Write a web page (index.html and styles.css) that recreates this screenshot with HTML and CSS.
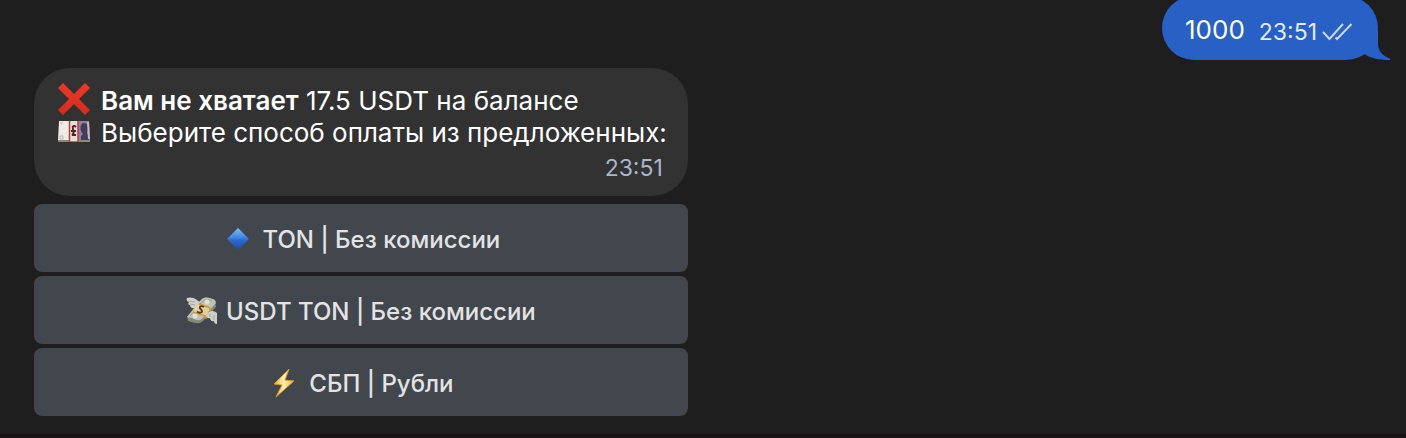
FILE: index.html
```html
<!DOCTYPE html>
<html lang="ru">
<head>
<meta charset="utf-8">
<title>Чат</title>
<link rel="stylesheet" href="styles.css">
</head>
<body>
<main class="chat">
  <article class="bubble bubble-out">
    <p class="out-text">1000</p>
    <time class="time time-out">23:51</time>
    <svg class="checks" viewBox="0 0 32 20" role="img" aria-label="Прочитано"><path d="M2 10 8.500 17 22 2M14.500 15.500 16 17 30.500 2"/></svg>
    <svg class="tail" viewBox="0 0 34 30" aria-hidden="true"><path d="M22 0V14C22 21 27 26 34 28.500V30C23 30 13 28 8 23.500L0 20V0Z"/></svg>
  </article>

  <section class="incoming">
    <article class="bubble bubble-in">
      <p class="line">
        <svg class="emoji" viewBox="0 0 34 34" role="img" aria-label="Крестик"><defs><linearGradient id="red" x2="0" y2="1"><stop stop-color="#ed3928"/><stop offset="1" stop-color="#d32b1d"/></linearGradient></defs><path fill="url(#red)" d="M6 1 17 12 28 1 33 6 22 17 33 28 28 33 17 22 6 33 1 28 12 17 1 6Z"/></svg>
        <span><strong>Вам не хватает</strong> 17.5 USDT на балансе</span>
      </p>
      <p class="line">
        <svg class="emoji" viewBox="0 0 34 34" role="img" aria-label="Банкноты">
          <path fill="#8b897d" d="M1 25H33V28H1Z"/><path fill="#eeebe5" d="M2 7H13V26H1Z"/><path fill="none" stroke="#bcb8b4" d="M3 9H6M3 22H6V25H3Z"/>
          <path fill="#8b849c" d="M21 7H32L33 26H21Z"/><path fill="#423c5d" d="M24 26V22L26 20C22 16 23 9 27 9S32 14 30 19L32 23V26Z"/>
          <path fill="#c9b8ba" d="M30 8H32L33 25H31Z"/><path fill="#e8dcda" d="M13 7H21V27H12Z"/><path fill="none" stroke="#bd3b3b" stroke-width="1.500" d="M12.500 7V28M21 7V28"/>
          <path fill="none" stroke="#47282d" stroke-width="2" d="M19 13C17 11 15 12 16 15S17 20 15 21H19M14 17H19"/>
        </svg>
        <span>Выберите способ оплаты из предложенных:</span>
      </p>
      <time class="time time-in">23:51</time>
    </article>
    <div class="keyboard">
      <button class="key key-wide" type="button">
        <svg class="icon" viewBox="0 0 24 30" aria-hidden="true"><defs><linearGradient id="blue" x2="0" y2="1"><stop stop-color="#83bff7"/><stop offset=".45" stop-color="#3f82df"/><stop offset=".55" stop-color="#2d69ce"/><stop offset="1" stop-color="#1e49a6"/></linearGradient></defs><path fill="url(#blue)" d="M12 4 23 15 12 26 1 15Z"/></svg>
        <span>TON | Без комиссии</span>
      </button>
      <button class="key" type="button">
        <svg class="icon icon-money" viewBox="0 0 32 30" aria-hidden="true">
          <path fill="#85897b" d="M1 21 14 5C18 0 22 1 29 4L30 11 18 24C13 29 9 27 2 25Z"/>
          <path fill="#bfc2b3" d="M1 21 14 5C18 0 22 1 29 4L30 7 17 22C12 27 8 22 1 21Z"/>
          <path fill="none" stroke="#98a08f" d="M4 20 16 6C19 3 22 3 26 5"/>
          <circle cx="21" cy="6" r="2.500" fill="#e0e2d6"/><circle cx="9" cy="20" r="2.500" fill="#e0e2d6"/>
          <path fill="#e8d09a" d="M11 7 24 12 20 20 7 16Z"/><path fill="none" stroke="#d59c2c" stroke-width="1.500" d="M11 7 24 12V15M7 16 20 20V23"/>
          <path fill="none" stroke="#4a3d2c" stroke-width="1.800" d="M18 11C15 9 12 11 15 13.500S14 18 11 15.500"/>
          <path fill="#d2d1c8" d="M1 2C7 0 11 4 14 6L9 12C6 13 4 11 4 9C2 9 2 7 3 6C1 6 0 3 1 2Z"/><path fill="none" stroke="#a3a79c" d="M3 5 9 6M4 8 9 9"/>
          <path fill="#d2d1c8" d="M20 19C23 14 28 14 31 17V28C29 28 28 27 28 25C26 26 24 24 24 22C22 23 20 21 20 19Z"/><path fill="none" stroke="#a3a79c" d="M24 21V18M28 24V19"/>
        </svg>
        <span>USDT TON | Без комиссии</span>
      </button>
      <button class="key key-wide" type="button">
        <svg class="icon" viewBox="0 0 24 30" aria-hidden="true"><defs><linearGradient id="gold"><stop stop-color="#f5aa24"/><stop offset=".5" stop-color="#fff3b6"/><stop offset="1" stop-color="#f4aa2a"/></linearGradient></defs><path fill="url(#gold)" stroke="#d99530" d="M17 1 2 16 10 17 4 29 22 13 13 12Z"/></svg>
        <span>СБП | Рубли</span>
      </button>
    </div>
  </section>
</main>
<div class="bottom-edge"></div>
</body>
</html>
```
FILE: styles.css
```css
* {
  box-sizing: border-box;
}

body {
  margin: 0;
  min-height: 100vh;
  display: flex;
  flex-direction: column;
  overflow: hidden;
  background: #1e1e1e;
  color: #fff;
  font-family: Inter, "Noto Sans", sans-serif;
  font-size: 26px;
  line-height: 32px;
}

p {
  margin: 0;
}

strong {
  font-weight: 600;
}

.chat {
  flex: 1;
  display: flex;
  flex-direction: column;
  gap: 8px;
  padding: 0 28px 0 34px;
  margin-top: -4px;
}

.bubble-out {
  position: relative;
  align-self: flex-end;
  display: flex;
  align-items: center;
  height: 64px;
  padding: 4px 25px 0 23px;
  border-radius: 32px;
  background: #2860c5;
}

.out-text {
  margin-right: 14px;
}

.time {
  font-size: 23px;
}

.time-out {
  padding-top: 4px;
  color: #e4ecfa;
}

.checks {
  width: 32px;
  height: 20px;
  margin: 4px 0 0 4px;
  fill: none;
  stroke: #c8d8f5;
  stroke-width: 2;
}

.tail {
  position: absolute;
  right: -12px;
  bottom: 0;
  width: 34px;
  height: 30px;
  fill: #2860c5;
}

.incoming {
  align-self: flex-start;
  display: flex;
  flex-direction: column;
  gap: 8px;
}

.bubble-in {
  display: flex;
  flex-direction: column;
  padding: 17px 21px 12px 23px;
  border-radius: 36px;
  background: #323232;
}

.line {
  display: flex;
  align-items: center;
  gap: 10px;
  white-space: nowrap;
}

.emoji {
  flex: none;
  width: 34px;
  height: 34px;
  margin: -4px 0 0;
}

.time-in {
  align-self: flex-end;
  padding: 3px 4px 0 0;
  color: #a9b6cc;
}

.keyboard {
  display: flex;
  flex-direction: column;
  gap: 4px;
}

.key {
  display: flex;
  align-items: center;
  justify-content: center;
  gap: 8px;
  height: 68px;
  padding: 4px 16px 0;
  border: 0;
  border-radius: 8px;
  background: #42464d;
  color: #e2e3e4;
  font: 500 24px/32px Inter, "Noto Sans", sans-serif;
  cursor: pointer;
}

.key-wide {
  gap: 13px;
  padding-left: 20px;
}

.icon {
  flex: none;
  width: 24px;
  height: 30px;
  margin-top: -2px;
}

.icon-money {
  width: 32px;
}

.bottom-edge {
  height: 4px;
  background: #1a1218;
}
```
